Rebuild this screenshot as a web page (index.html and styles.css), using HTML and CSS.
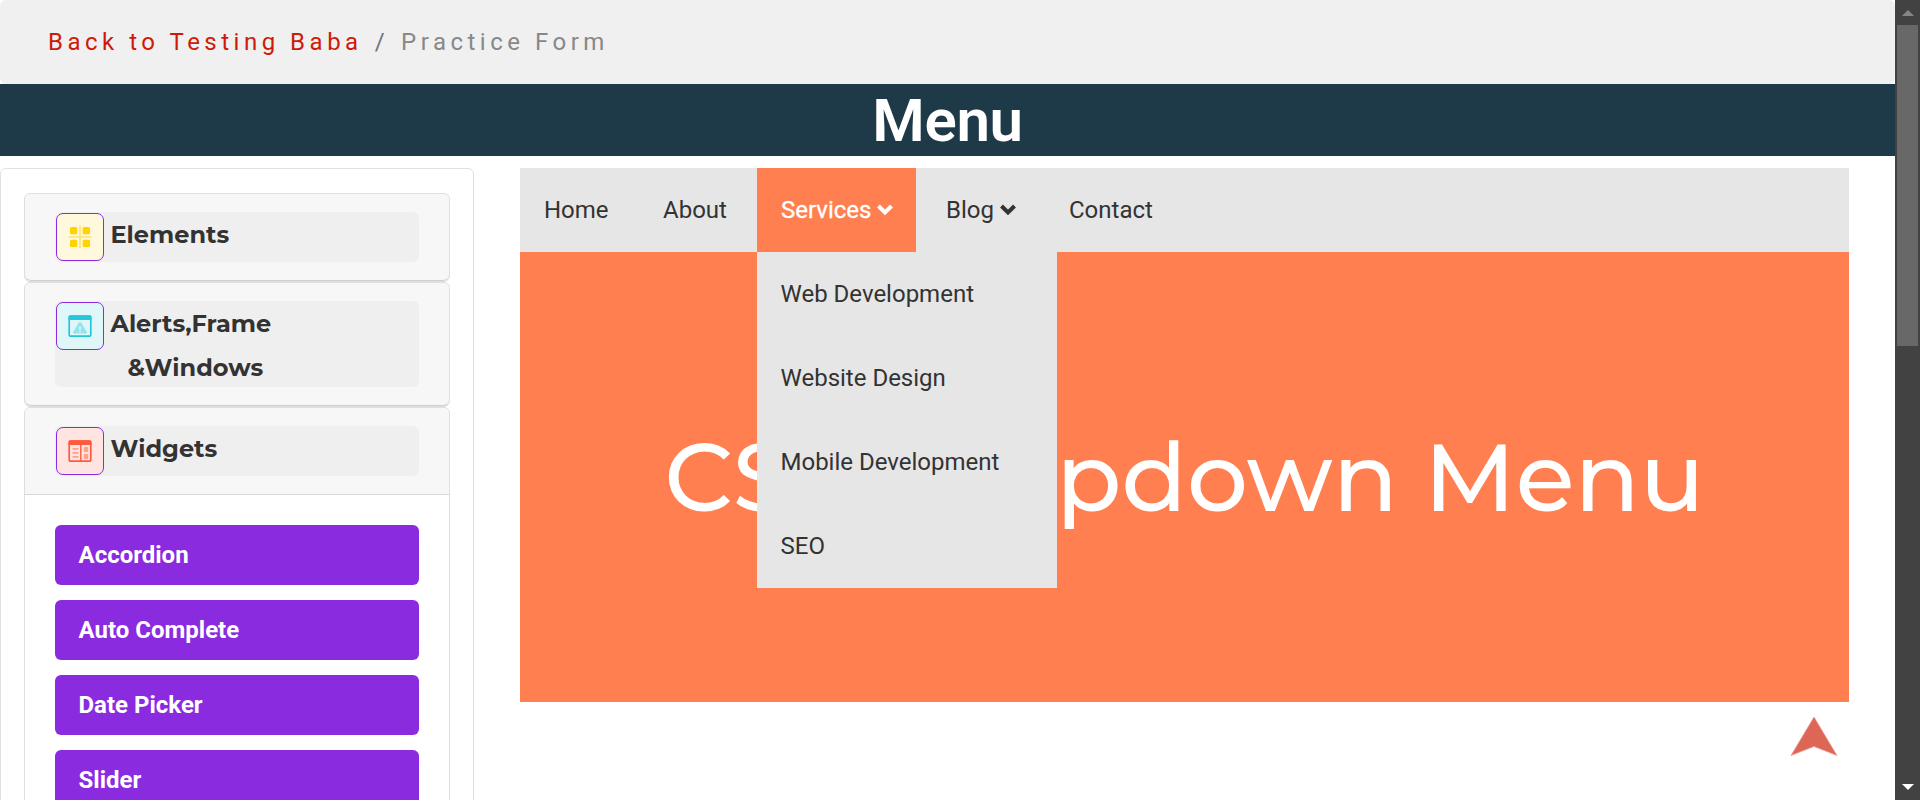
FILE: index.html
```html
<!DOCTYPE html>
<html lang="en">
<head>
<meta charset="utf-8">
<title>Menu</title>
<link rel="stylesheet" href="styles.css">
</head>
<body>
<div class="screen">
  <div class="page">
    <nav class="breadcrumb"><a class="crumb-link">Back to Testing Baba</a><span class="sep">/</span><span class="crumb">Practice Form</span></nav>
    <h1 class="title">Menu</h1>
    <div class="columns">
      <aside class="sidebar">
        <section class="card">
          <div class="card-head"><div class="toggle">
            <span class="icon icon-yellow"><svg width="24" height="24" viewBox="0 0 24 24"><path d="M12 .5v23M.5 12h23" stroke="#ffe680" stroke-width="2"/><g fill="#ffd200"><rect x="2" y="2" width="7.300" height="7.300" rx="1.500"/><rect x="14.700" y="2" width="7.300" height="7.300" rx="1.500"/><rect x="2" y="14.700" width="7.300" height="7.300" rx="1.500"/><rect x="14.700" y="14.700" width="7.300" height="7.300" rx="1.500"/></g></svg></span>
            <span class="label"><span class="elements">Elements</span></span>
          </div></div>
        </section>
        <section class="card">
          <div class="card-head"><div class="toggle">
            <span class="icon icon-cyan"><svg width="24" height="24" viewBox="0 0 24 24"><rect x="1.200" y="2.200" width="21.600" height="20" rx="1.800" fill="none" stroke="#26c6da" stroke-width="1.700"/><path d="M.5 6V3Q.5 1.300 2 1.300h20q1.500 0 1.500 1.700v3z" fill="#26c6da"/><path d="M12 8q.7 0 1.200.8l5.500 9q.7 1.700-.7 1.700H6q-1.400 0-.7-1.700l5.500-9Q11.300 8 12 8z" fill="#93e3ed"/><path d="M12 12.500v3.500M12 17v1.500" stroke="#e0f7fa" stroke-width="1.600"/></svg></span>
            <span class="label"><span class="alerts">Alerts,Frame</span><span class="windows">&amp;Windows</span></span>
          </div></div>
        </section>
        <section class="card card-open">
          <div class="card-head"><div class="toggle">
            <span class="icon icon-red"><svg width="24" height="24" viewBox="0 0 24 24"><rect x="1.200" y="2.200" width="21.600" height="20" rx="1.800" fill="none" stroke="#ff5a3c" stroke-width="1.700"/><path d="M.5 6V3Q.5 1.300 2 1.300h20q1.500 0 1.500 1.700v3z" fill="#ff5a3c"/><path d="M12.800 6v16" stroke="#ff5a3c" stroke-width="1.400"/><g fill="#ff9f8c"><path d="M4.500 9h6v1.700h-6zM4.500 13h6v1.700h-6zM4.500 17h6v1.700h-6z"/><rect x="15.800" y="8" width="4.400" height="5" rx="1"/><rect x="15.800" y="15" width="4.400" height="5" rx="1"/></g></svg></span>
            <span class="label"><span class="widgets">Widgets</span></span>
          </div></div>
          <div class="links">
            <a class="link">Accordion</a>
            <a class="link">Auto Complete</a>
            <a class="link">Date Picker</a>
            <a class="link">Slider</a>
          </div>
        </section>
      </aside>
      <main class="demo">
        <ul class="menu">
          <li class="item home">Home</li>
          <li class="item about">About</li>
          <li class="item services"><span class="active-text">Services</span><svg class="chevron" viewBox="0 0 16 12"><path d="M1.500 2l6.500 6.500L14.500 2" fill="none" stroke="currentColor" stroke-width="4"/></svg>
            <ul class="dropdown"><li>Web Development</li><li>Website Design</li><li>Mobile Development</li><li>SEO</li></ul>
          </li>
          <li class="item blog">Blog<svg class="chevron" viewBox="0 0 16 12"><path d="M1.500 2l6.500 6.500L14.500 2" fill="none" stroke="currentColor" stroke-width="4"/></svg></li>
          <li class="item">Contact</li>
        </ul>
        <div class="hero">CSS Dropdown Menu</div>
      </main>
    </div>
    <svg class="to-top" viewBox="0 0 48 41"><path d="M24 1L47 39.500 24 30.500 1 39.500z" fill="#dd6655" stroke="#eaa197" stroke-width=".8"/></svg>
  </div>
  <div class="scrollbar">
    <svg class="arrow" width="12" height="6" viewBox="0 0 12 6"><path d="M6 0l6 6H0z" fill="#858585"/></svg>
    <div class="thumb"></div>
    <svg class="arrow arrow-down" width="12" height="6" viewBox="0 0 12 6"><path d="M0 0h12L6 6z" fill="#fff"/></svg>
  </div>
</div>
</body>
</html>
```
FILE: styles.css
```css
* { box-sizing: border-box; }
body { margin: 0; font: 24px/36px Roboto, sans-serif; color: #333; background: #fff; overflow: hidden; }
ul { margin: 0; padding: 0; list-style: none; }
.screen { display: flex; height: 800px; overflow: hidden; }
.page { position: relative; width: 1895px; height: 800px; overflow: hidden; }
.breadcrumb { height: 84px; padding: 24px 48px; background: #f0f0f0; border-radius: 6px; letter-spacing: 4.500px; color: #6c757d; white-space: nowrap; }
.crumb-link { color: #cc1b0a; }
.sep { margin: 0 12px; }
.crumb { color: #888; }
.title { height: 72px; margin: 0; background: #1e3948; color: #fff; font-size: 60px; line-height: 74px; font-weight: 600; letter-spacing: -.3px; text-align: center; }
.columns { display: flex; align-items: flex-start; gap: 46px; margin-top: 12px; }
.sidebar { width: 474px; height: 900px; padding: 24px 23px; border: 1px solid #dee2e6; border-radius: 6px; }
.card { border: 1px solid #dfdfdf; border-radius: 6px; background: #f7f7f7; }
.card-open { background: #fff; height: 700px; }
.card-head { padding: 18px 30px; border-bottom: 1px solid #cfcfcf; background: #f7f7f7; border-radius: 6px; }
.card-open .card-head { border-radius: 6px 6px 0 0; border-bottom-color: #d8d8d8; }
.toggle { display: flex; min-height: 50px; background: #efefef; border-radius: 6px; }
.icon { display: flex; align-items: center; justify-content: center; flex: none; width: 48px; height: 48px; margin: 1px 6.500px 0 1px; border: 1px solid #8a2be2; border-radius: 7px; }
.icon-yellow { background: #fff8dc; }
.icon-cyan { background: #e0f7fa; }
.icon-red { background: #ffe4e1; }
.label { display: flex; flex-direction: column; align-items: flex-start; padding: 5px 0 1px; font: 700 24px/36px Montserrat, Inter, sans-serif; }
.windows { margin: 8px 0 0 17px; }
.links { display: flex; flex-direction: column; gap: 15px; padding: 30px; }
.link { height: 60px; padding: 12px 23.500px; border-radius: 6px; background: #8a2be0; color: #fff; font-weight: 700; }
.demo { width: 1329px; }
.menu { display: flex; height: 84px; background: #e6e6e6; }
.item { position: relative; padding: 0 24px; line-height: 84px; white-space: nowrap; }
.home { width: 119px; }
.about { width: 118px; }
.services { width: 159px; margin-right: 6px; background: #ff7f50; color: #fff; }
.active-text { -webkit-text-stroke: .3px #fff; }
.blog { width: 123px; }
.chevron { width: 16px; height: 12px; margin-left: 6px; vertical-align: 2px; }
.dropdown { position: absolute; left: 0; top: 84px; width: 300px; background: #e6e6e6; color: #333; }
.dropdown li { height: 84px; padding-left: 23.500px; }
.hero { height: 450px; background: #ff7f50; color: #fff; font: 500 96px/449px Montserrat, Inter, sans-serif; text-align: center; white-space: nowrap; }
.to-top { position: absolute; right: 57px; bottom: 43px; width: 48px; height: 41px; }
.scrollbar { display: flex; flex-direction: column; align-items: center; width: 25px; height: 800px; padding: 10px 0; background: #424242; }
.thumb { width: 21px; height: 321px; margin-top: 9px; background: #686868; }
.arrow-down { margin-top: auto; }
```
